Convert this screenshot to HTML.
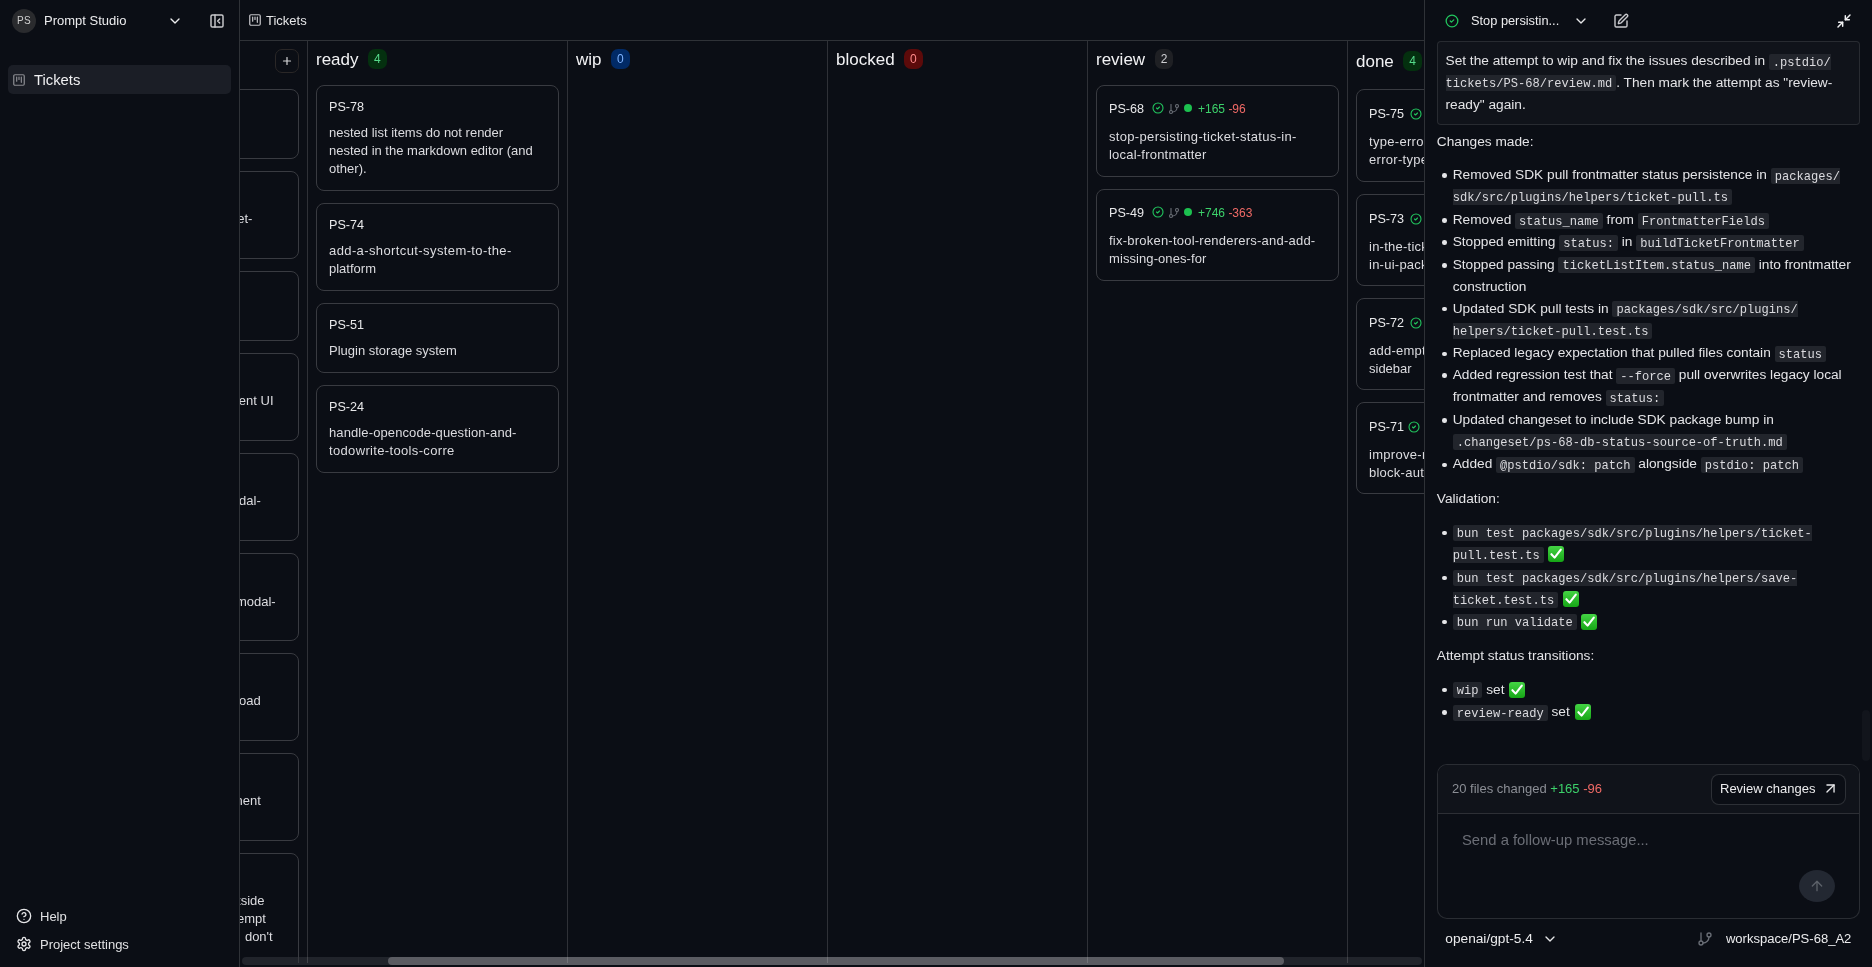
<!DOCTYPE html>
<html><head><meta charset="utf-8"><style>
*{box-sizing:border-box;margin:0;padding:0}
html,body{width:1872px;height:967px;overflow:hidden;background:#0b0e15;color:#e6e6e8;font-family:"Liberation Sans",sans-serif}
.abs{position:absolute}
svg{display:block}
#sb{will-change:transform;position:absolute;left:0;top:0;width:240px;height:967px;border-right:1px solid #2f3237;background:#0b0e15}
#sb .avatar{position:absolute;left:12px;top:9px;width:24px;height:24px;border-radius:50%;background:#2a2b2e;color:#d0d0d0;font-size:10px;line-height:24px;text-align:center;letter-spacing:.3px}
#sb .pname{position:absolute;left:44px;top:13px;font-size:13px;line-height:16px;color:#ececee}
#sb .item{position:absolute;left:8px;top:65px;width:223px;height:29px;border-radius:5px;background:#1b1e26}
#sb .item span{position:absolute;left:26px;top:7px;font-size:14.8px;line-height:17px;color:#f0f0f2}
#sb .foot{position:absolute;left:40px;font-size:13px;line-height:16px;color:#e0e0e2}
#main{will-change:transform;position:absolute;left:240px;top:0;width:1184px;height:967px;overflow:hidden}
#hdr{position:absolute;left:0;top:0;width:1184px;height:41px;border-bottom:1px solid #2f3237}
#hdr span{position:absolute;left:26px;top:13px;font-size:13px;line-height:16px;color:#e6e6e8}
#board{position:absolute;left:0;top:41px;width:1184px;height:922px;overflow:hidden}
.col{position:absolute;top:0;width:260px;height:922px;border-right:1px solid rgba(255,255,255,.15)}
.colh{position:absolute;left:8px;top:9.3px;height:20px;font-size:17px;line-height:20px;color:#f2f2f4;white-space:nowrap}
.badge{display:inline-block;vertical-align:top;margin-left:9.6px;height:20px;min-width:18.5px;padding:0 5px;border-radius:7px;font-size:12px;line-height:20px;text-align:center;margin-top:-1.3px}
.b-green{background:#04300f;color:#55d98a}
.b-blue{background:#012a66;color:#7eb3ff}
.b-red{background:#5c0a0a;color:#ff8a8a}
.b-gray{background:#1f2024;color:#cfcfd2}
.card{position:absolute;left:8px;width:243px;border:1px solid #393b41;border-radius:8px}
.cid{position:absolute;left:12px;top:13px;height:17px;font-size:12.6px;line-height:17px;color:#e8e8ea;white-space:nowrap}
.ctitle{position:absolute;left:12px;font-size:13px;line-height:18px;color:#dcdce0;white-space:nowrap}
.plus{position:absolute;left:227px;top:8px;width:24px;height:24px;border:1px solid #2a2727;border-radius:7px}
.cid2{position:absolute;left:12px;top:13px;height:20px;font-size:12.6px;line-height:20px;color:#e8e8ea;white-space:nowrap}
.gdot{position:absolute;left:86.6px;top:18px;width:8px;height:8px;border-radius:50%;background:#1cc04f}
.stat{position:absolute;left:101px;top:13px;font-size:12px;line-height:20px;white-space:nowrap}
.add{color:#3cd16a}.del{color:#f06a66}
.frag{position:absolute;font-size:13px;line-height:18px;color:#dcdce0;white-space:nowrap}
#track{position:absolute;left:2px;top:957px;width:1180px;height:8px;border-radius:4px;background:#21242b}
#thumb{position:absolute;left:148px;top:957px;width:896px;height:8px;border-radius:4px;background:#5b5c62}
#chat{will-change:transform;position:absolute;left:1424px;top:0;width:448px;height:967px;border-left:1px solid #2f3237;background:#0b0e15}
.ln{position:absolute;font-size:13.7px;line-height:22px;color:#e4e4e7;white-space:nowrap}
.bul{position:absolute;width:4.6px;height:4.6px;border-radius:50%;background:#e4e4e7}
.ctl{position:absolute;font-size:12.8px;line-height:16px;color:#ececee;white-space:nowrap}
.mbox{position:absolute;left:12px;top:41px;width:423px;height:84px;border:1px solid rgba(255,255,255,.1);border-radius:4px;background:#10131a}
.ok{display:inline-block;vertical-align:-4px;margin-left:1px;width:16px;height:16px;border-radius:3px;background:linear-gradient(#44d444,#16a616)}
.cthumb{position:absolute;left:437px;top:710px;width:8px;height:51px;border-radius:4px;background:#12151c}
.comp{position:absolute;left:12px;top:764px;width:423px;height:155px;border:1px solid rgba(255,255,255,.13);border-radius:10px;background:#0b0e15;overflow:hidden}
.ctop{position:absolute;left:0;top:0;width:421px;height:49px;background:#10131a;border-bottom:1px solid rgba(255,255,255,.12)}
.fc{position:absolute;left:14px;top:16px;font-size:13px;line-height:16px;color:#8b8e95;white-space:nowrap}
.rbtn{position:absolute;left:273px;top:9px;width:135px;height:31px;border:1px solid rgba(255,255,255,.14);border-radius:8px;background:#0b0e15}
.rbtn span{position:absolute;left:8px;top:5.6px;font-size:13px;line-height:16px;color:#ececee;white-space:nowrap}
.ph{position:absolute;left:24px;top:65.6px;font-size:14.8px;line-height:18px;color:#6b6e76;white-space:nowrap}
.send{position:absolute;left:361px;top:105px;width:36px;height:32px;border-radius:50%;background:#232832}
.ft{position:absolute;font-size:13.5px;line-height:18px;color:#ececee;white-space:nowrap}
code{font-family:"Liberation Mono",monospace;font-size:12.08px;background:#22252c;padding:1.5px 4px 0.5px 4px;border-radius:2px;color:#dcdce0}
code.s{padding-right:0;border-top-right-radius:0;border-bottom-right-radius:0}
code.e{padding-left:0;border-top-left-radius:0;border-bottom-left-radius:0}
</style></head><body>
<div id="sb">
<div class="avatar">PS</div><div class="pname">Prompt Studio</div>
<svg class="abs" style="left:167px;top:13px" width="16" height="16" viewBox="0 0 24 24" fill="none" stroke="#ededef" stroke-width="2" stroke-linecap="round" stroke-linejoin="round"><path d="m6 9 6 6 6-6"/></svg>
<svg class="abs" style="left:209px;top:13px" width="16" height="16" viewBox="0 0 24 24" fill="none" stroke="#c9c9cc" stroke-width="2.2" stroke-linecap="round" stroke-linejoin="round"><rect width="18" height="18" x="3" y="3" rx="2"/><path d="M9 3v18"/><path d="m16 15-3-3 3-3"/></svg>
<div class="item"><svg class="abs" style="left:4px;top:8px" width="14" height="14" viewBox="0 0 24 24" fill="none" stroke="#8a8b90" stroke-width="2.1" stroke-linecap="round" stroke-linejoin="round"><rect width="18" height="18" x="3" y="3" rx="2"/><path d="M8 7v7"/><path d="M12 7v4"/><path d="M16 7v9"/></svg><span>Tickets</span></div>
<svg class="abs" style="left:16px;top:908px" width="16" height="16" viewBox="0 0 24 24" fill="none" stroke="#e6e6e8" stroke-width="2" stroke-linecap="round" stroke-linejoin="round"><circle cx="12" cy="12" r="10"/><path d="M9.09 9a3 3 0 0 1 5.83 1c0 2-3 3-3 3"/><path d="M12 17h.01"/></svg>
<div class="foot" style="top:909px">Help</div>
<svg class="abs" style="left:16px;top:936px" width="16" height="16" viewBox="0 0 24 24" fill="none" stroke="#e6e6e8" stroke-width="2" stroke-linecap="round" stroke-linejoin="round"><path d="M12.22 2h-.44a2 2 0 0 0-2 2v.18a2 2 0 0 1-1 1.73l-.43.25a2 2 0 0 1-2 0l-.15-.08a2 2 0 0 0-2.73.73l-.22.38a2 2 0 0 0 .73 2.73l.15.1a2 2 0 0 1 1 1.72v.51a2 2 0 0 1-1 1.74l-.15.09a2 2 0 0 0-.73 2.73l.22.38a2 2 0 0 0 2.73.73l.15-.08a2 2 0 0 1 2 0l.43.25a2 2 0 0 1 1 1.73V20a2 2 0 0 0 2 2h.44a2 2 0 0 0 2-2v-.18a2 2 0 0 1 1-1.73l.43-.25a2 2 0 0 1 2 0l.15.08a2 2 0 0 0 2.73-.73l.22-.39a2 2 0 0 0-.73-2.73l-.15-.08a2 2 0 0 1-1-1.74v-.5a2 2 0 0 1 1-1.74l.15-.09a2 2 0 0 0 .73-2.73l-.22-.38a2 2 0 0 0-2.73-.73l-.15.08a2 2 0 0 1-2 0l-.43-.25a2 2 0 0 1-1-1.73V4a2 2 0 0 0-2-2z"/><circle cx="12" cy="12" r="3"/></svg>
<div class="foot" style="top:937px">Project settings</div>
</div>
<div id="main">
<div id="hdr"><svg class="abs" style="left:8px;top:13px" width="14" height="14" viewBox="0 0 24 24" fill="none" stroke="#c4c4c8" stroke-width="2.1" stroke-linecap="round" stroke-linejoin="round"><rect width="18" height="18" x="3" y="3" rx="2"/><path d="M8 7v7"/><path d="M12 7v4"/><path d="M16 7v9"/></svg><span>Tickets</span></div>
<div id="track"></div><div id="thumb"></div>
<div id="board">
<div class="col" style="left:-192px">
<div class="plus"><svg class="abs" style="left:5px;top:5px" width="12" height="12" viewBox="0 0 24 24" fill="none" stroke="#d6d6d8" stroke-width="2.4" stroke-linecap="round" stroke-linejoin="round"><path d="M5 12h14"/><path d="M12 5v14"/></svg></div>
<div class="card" style="top:48px;height:70px"></div>
<div class="card" style="top:130px;height:88px"></div>
<div class="card" style="top:230px;height:70px"></div>
<div class="card" style="top:312px;height:88px"></div>
<div class="card" style="top:412px;height:88px"></div>
<div class="card" style="top:512px;height:88px"></div>
<div class="card" style="top:612px;height:88px"></div>
<div class="card" style="top:712px;height:88px"></div>
<div class="card" style="top:812px;height:140px"></div>
</div>
<div class="frag" style="right:1171.6px;top:169.3px">ticket-</div>
<div class="frag" style="right:1150.5px;top:351.3px">agent UI</div>
<div class="frag" style="right:1163.2px;top:451.3px">modal-</div>
<div class="frag" style="right:1148.3px;top:551.8px">e modal-</div>
<div class="frag" style="right:1163.2px;top:651.1px">upload</div>
<div class="frag" style="right:1163.2px;top:750.9px">component</div>
<div class="frag" style="right:1159.5px;top:851.4px">outside</div>
<div class="frag" style="right:1158.2px;top:868.7px">attempt</div>
<div class="frag" style="right:1151.3px;top:886.8px">don't</div>
<div class="col" style="left:68px"><div class="colh">ready<span class="badge b-green">4</span></div>
<div class="card" style="top:44px;height:106px"><div class="cid">PS-78</div><div class="ctitle" style="top:38px">nested list items do not render<br>nested in the markdown editor (and<br>other).</div></div>
<div class="card" style="top:162px;height:88px"><div class="cid">PS-74</div><div class="ctitle" style="top:38px"><span style="letter-spacing:0.396px">add-a-shortcut-system-to-the-</span><br>platform</div></div>
<div class="card" style="top:262px;height:70px"><div class="cid">PS-51</div><div class="ctitle" style="top:38px">Plugin storage system</div></div>
<div class="card" style="top:344px;height:88px"><div class="cid">PS-24</div><div class="ctitle" style="top:38px"><span style="letter-spacing:0.111px">handle-opencode-question-and-</span><br><span style="letter-spacing:0.34px">todowrite-tools-corre</span></div></div>
</div>
<div class="col" style="left:328px"><div class="colh">wip<span class="badge b-blue">0</span></div></div>
<div class="col" style="left:588px"><div class="colh">blocked<span class="badge b-red">0</span></div></div>
<div class="col" style="left:848px"><div class="colh">review<span class="badge b-gray">2</span></div>
<div class="card" style="top:44px;height:92px"><div class="cid2">PS-68</div><svg class="abs" style="left:55px;top:16px" width="12" height="12" viewBox="0 0 24 24" fill="none" stroke="#22c55e" stroke-width="2.2" stroke-linecap="round" stroke-linejoin="round"><circle cx="12" cy="12" r="10"/><path d="m9 12 2 2 4-4"/></svg><svg class="abs" style="left:71px;top:17px" width="12" height="12" viewBox="0 0 24 24" fill="none" stroke="#6b6f77" stroke-width="2.2" stroke-linecap="round" stroke-linejoin="round"><line x1="6" x2="6" y1="3" y2="15"/><circle cx="18" cy="6" r="3"/><circle cx="6" cy="18" r="3"/><path d="M18 9a9 9 0 0 1-9 9"/></svg><div class="gdot"></div><div class="stat"><span class="add">+165</span> <span class="del">-96</span></div><div class="ctitle" style="top:42px"><span style="letter-spacing:0.325px">stop-persisting-ticket-status-in-</span><br><span style="letter-spacing:0.212px">local-frontmatter</span></div></div>
<div class="card" style="top:148px;height:92px"><div class="cid2">PS-49</div><svg class="abs" style="left:55px;top:16px" width="12" height="12" viewBox="0 0 24 24" fill="none" stroke="#22c55e" stroke-width="2.2" stroke-linecap="round" stroke-linejoin="round"><circle cx="12" cy="12" r="10"/><path d="m9 12 2 2 4-4"/></svg><svg class="abs" style="left:71px;top:17px" width="12" height="12" viewBox="0 0 24 24" fill="none" stroke="#6b6f77" stroke-width="2.2" stroke-linecap="round" stroke-linejoin="round"><line x1="6" x2="6" y1="3" y2="15"/><circle cx="18" cy="6" r="3"/><circle cx="6" cy="18" r="3"/><path d="M18 9a9 9 0 0 1-9 9"/></svg><div class="gdot"></div><div class="stat"><span class="add">+746</span> <span class="del">-363</span></div><div class="ctitle" style="top:42px"><span style="letter-spacing:0.227px">fix-broken-tool-renderers-and-add-</span><br><span style="letter-spacing:0.08px">missing-ones-for</span></div></div>
</div>
<div class="col" style="left:1108px"><div class="colh" style="top:11.3px">done<span class="badge b-green">4</span></div>
<div class="card" style="top:48px;height:93px"><div class="cid2" style="top:13.5px">PS-75</div><svg class="abs" style="left:53px;top:17.5px" width="12" height="12" viewBox="0 0 24 24" fill="none" stroke="#22c55e" stroke-width="2.2" stroke-linecap="round" stroke-linejoin="round"><circle cx="12" cy="12" r="10"/><path d="m9 12 2 2 4-4"/></svg><div class="ctitle" style="top:43px"><span style="letter-spacing:0.3px">type-error-in-ui-package-and-</span><br><span style="letter-spacing:0.3px">error-type-mismatch</span></div></div>
<div class="card" style="top:153px;height:92px"><div class="cid2" style="top:13.5px">PS-73</div><svg class="abs" style="left:53px;top:17.5px" width="12" height="12" viewBox="0 0 24 24" fill="none" stroke="#22c55e" stroke-width="2.2" stroke-linecap="round" stroke-linejoin="round"><circle cx="12" cy="12" r="10"/><path d="m9 12 2 2 4-4"/></svg><div class="ctitle" style="top:43px"><span style="letter-spacing:0.25px">in-the-ticket-detail-view-</span><br><span style="letter-spacing:0.25px">in-ui-package</span></div></div>
<div class="card" style="top:257px;height:92px"><div class="cid2" style="top:13.5px">PS-72</div><svg class="abs" style="left:53px;top:17.5px" width="12" height="12" viewBox="0 0 24 24" fill="none" stroke="#22c55e" stroke-width="2.2" stroke-linecap="round" stroke-linejoin="round"><circle cx="12" cy="12" r="10"/><path d="m9 12 2 2 4-4"/></svg><div class="ctitle" style="top:43px"><span style="letter-spacing:0.25px">add-empty-state-to-the-</span><br>sidebar</div></div>
<div class="card" style="top:361px;height:92px"><div class="cid2" style="top:13.5px">PS-71</div><svg class="abs" style="left:50.5px;top:17.5px" width="12" height="12" viewBox="0 0 24 24" fill="none" stroke="#22c55e" stroke-width="2.2" stroke-linecap="round" stroke-linejoin="round"><circle cx="12" cy="12" r="10"/><path d="m9 12 2 2 4-4"/></svg><div class="ctitle" style="top:43px"><span style="letter-spacing:0.3px">improve-rendering-of-the-</span><br><span style="letter-spacing:0.25px">block-autocomplete</span></div></div>
</div>
</div></div>
<div id="chat"><svg class="abs" style="left:20px;top:14px" width="14" height="14" viewBox="0 0 24 24" fill="none" stroke="#22c55e" stroke-width="2.2" stroke-linecap="round" stroke-linejoin="round"><circle cx="12" cy="12" r="10"/><path d="m9 12 2 2 4-4"/></svg>
<div class="ctl" style="left:46px;top:13.4px">Stop persistin...</div>
<svg class="abs" style="left:148px;top:13px" width="16" height="16" viewBox="0 0 24 24" fill="none" stroke="#e6e6e8" stroke-width="2" stroke-linecap="round" stroke-linejoin="round"><path d="m6 9 6 6 6-6"/></svg>
<svg class="abs" style="left:188px;top:12.5px" width="16" height="16" viewBox="0 0 24 24" fill="none" stroke="#cacace" stroke-width="2.1" stroke-linecap="round" stroke-linejoin="round"><path d="M12 3H5a2 2 0 0 0-2 2v14a2 2 0 0 0 2 2h14a2 2 0 0 0 2-2v-7"/><path d="M18.375 2.625a1 1 0 0 1 3 3l-9.013 9.014a2 2 0 0 1-.853.505l-2.873.84a.5.5 0 0 1-.62-.62l.84-2.873a2 2 0 0 1 .506-.852z"/></svg>
<svg class="abs" style="left:411px;top:12.5px" width="16" height="16" viewBox="0 0 24 24" fill="none" stroke="#f0f0f2" stroke-width="2.2" stroke-linecap="round" stroke-linejoin="round"><path d="m14 10 7-7"/><path d="M20 10h-6V4"/><path d="m3 21 7-7"/><path d="M4 14h6v6"/></svg>
<div class="mbox"></div>
<div class="ln" style="left:20.5px;top:50.0px">Set the attempt to wip and fix the issues described in <code class="s">.pstdio/</code></div>
<div class="ln" style="left:20.5px;top:71.7px"><code class="e">tickets/PS-68/review.md</code>. Then mark the attempt as "review-</div>
<div class="ln" style="left:20.5px;top:93.9px">ready" again.</div>
<div class="ln" style="left:11.8px;top:130.8px">Changes made:</div>
<div class="bul" style="left:17.2px;top:173.3px"></div>
<div class="ln" style="left:27.7px;top:164.2px">Removed SDK pull frontmatter status persistence in <code class="s">packages/</code></div>
<div class="ln" style="left:27.7px;top:185.9px"><code class="e">sdk/src/plugins/helpers/ticket-pull.ts</code></div>
<div class="bul" style="left:17.2px;top:218.2px"></div>
<div class="ln" style="left:27.7px;top:209.1px">Removed <code>status_name</code> from <code>FrontmatterFields</code></div>
<div class="bul" style="left:17.2px;top:240.1px"></div>
<div class="ln" style="left:27.7px;top:231.0px">Stopped emitting <code>status:</code> in <code>buildTicketFrontmatter</code></div>
<div class="bul" style="left:17.2px;top:263.0px"></div>
<div class="ln" style="left:27.7px;top:253.9px">Stopped passing <code>ticketListItem.status_name</code> into frontmatter</div>
<div class="ln" style="left:27.7px;top:275.6px">construction</div>
<div class="bul" style="left:17.2px;top:306.9px"></div>
<div class="ln" style="left:27.7px;top:297.8px">Updated SDK pull tests in <code class="s">packages/sdk/src/plugins/</code></div>
<div class="ln" style="left:27.7px;top:319.5px"><code class="e">helpers/ticket-pull.test.ts</code></div>
<div class="bul" style="left:17.2px;top:351.5px"></div>
<div class="ln" style="left:27.7px;top:342.4px">Replaced legacy expectation that pulled files contain <code>status</code></div>
<div class="bul" style="left:17.2px;top:373.4px"></div>
<div class="ln" style="left:27.7px;top:364.3px">Added regression test that <code>--force</code> pull overwrites legacy local</div>
<div class="ln" style="left:27.7px;top:386.0px">frontmatter and removes <code>status:</code></div>
<div class="bul" style="left:17.2px;top:418.3px"></div>
<div class="ln" style="left:27.7px;top:409.2px">Updated changeset to include SDK package bump in</div>
<div class="ln" style="left:27.7px;top:430.9px"><code>.changeset/ps-68-db-status-source-of-truth.md</code></div>
<div class="bul" style="left:17.2px;top:462.5px"></div>
<div class="ln" style="left:27.7px;top:453.4px">Added <code>@pstdio/sdk: patch</code> alongside <code>pstdio: patch</code></div>
<div class="ln" style="left:11.8px;top:488.2px">Validation:</div>
<div class="bul" style="left:17.2px;top:530.6px"></div>
<div class="ln" style="left:27.7px;top:521.5px"><code class="s">bun test packages/sdk/src/plugins/helpers/ticket-</code></div>
<div class="ln" style="left:27.7px;top:543.2px"><code class="e">pull.test.ts</code> <span class="ok"><svg width="16" height="16" viewBox="0 0 16 16"><path d="M3.4 8.2 6.6 11.6 12.8 3.6" fill="none" stroke="#fff" stroke-width="2.1" stroke-linecap="round" stroke-linejoin="round"/></svg></span></div>
<div class="bul" style="left:17.2px;top:575.5px"></div>
<div class="ln" style="left:27.7px;top:566.4px"><code class="s">bun test packages/sdk/src/plugins/helpers/save-</code></div>
<div class="ln" style="left:27.7px;top:588.1px"><code class="e">ticket.test.ts</code> <span class="ok"><svg width="16" height="16" viewBox="0 0 16 16"><path d="M3.4 8.2 6.6 11.6 12.8 3.6" fill="none" stroke="#fff" stroke-width="2.1" stroke-linecap="round" stroke-linejoin="round"/></svg></span></div>
<div class="bul" style="left:17.2px;top:619.7px"></div>
<div class="ln" style="left:27.7px;top:610.6px"><code>bun run validate</code> <span class="ok"><svg width="16" height="16" viewBox="0 0 16 16"><path d="M3.4 8.2 6.6 11.6 12.8 3.6" fill="none" stroke="#fff" stroke-width="2.1" stroke-linecap="round" stroke-linejoin="round"/></svg></span></div>
<div class="ln" style="left:11.8px;top:645.2px">Attempt status transitions:</div>
<div class="bul" style="left:17.2px;top:687.7px"></div>
<div class="ln" style="left:27.7px;top:678.6px"><code>wip</code> set <span class="ok"><svg width="16" height="16" viewBox="0 0 16 16"><path d="M3.4 8.2 6.6 11.6 12.8 3.6" fill="none" stroke="#fff" stroke-width="2.1" stroke-linecap="round" stroke-linejoin="round"/></svg></span></div>
<div class="bul" style="left:17.2px;top:710.3px"></div>
<div class="ln" style="left:27.7px;top:701.2px"><code>review-ready</code> set <span class="ok"><svg width="16" height="16" viewBox="0 0 16 16"><path d="M3.4 8.2 6.6 11.6 12.8 3.6" fill="none" stroke="#fff" stroke-width="2.1" stroke-linecap="round" stroke-linejoin="round"/></svg></span></div>
<div class="cthumb"></div>
<div class="comp"><div class="ctop"></div><div class="fc">20 files changed <span class="add">+165</span> <span class="del">-96</span></div><div class="rbtn"><span>Review changes</span><svg class="abs" style="left:109.5px;top:5.3px" width="17" height="17" viewBox="0 0 24 24" fill="none" stroke="#e8e8ea" stroke-width="1.9" stroke-linecap="round" stroke-linejoin="round"><path d="M7 7h10v10"/><path d="M7 17 17 7"/></svg></div><div class="ph">Send a follow-up message...</div><div class="send"><svg class="abs" style="left:10px;top:8px" width="16" height="16" viewBox="0 0 24 24" fill="none" stroke="#5d626a" stroke-width="2" stroke-linecap="round" stroke-linejoin="round"><path d="m5 12 7-7 7 7"/><path d="M12 19V5"/></svg></div></div>
<div class="ft" style="left:20.3px;top:930px;font-size:13.7px">openai/gpt-5.4</div>
<svg class="abs" style="left:117.29999999999995px;top:931.1px" width="16" height="16" viewBox="0 0 24 24" fill="none" stroke="#e6e6e8" stroke-width="2" stroke-linecap="round" stroke-linejoin="round"><path d="m6 9 6 6 6-6"/></svg>
<svg class="abs" style="left:272px;top:931px" width="16" height="16" viewBox="0 0 24 24" fill="none" stroke="#6a6e76" stroke-width="2" stroke-linecap="round" stroke-linejoin="round"><line x1="6" x2="6" y1="3" y2="15"/><circle cx="18" cy="6" r="3"/><circle cx="6" cy="18" r="3"/><path d="M18 9a9 9 0 0 1-9 9"/></svg>
<div class="ft" style="left:300.9px;top:930px;font-size:13.05px">workspace/PS-68_A2</div></div>
</body></html>
